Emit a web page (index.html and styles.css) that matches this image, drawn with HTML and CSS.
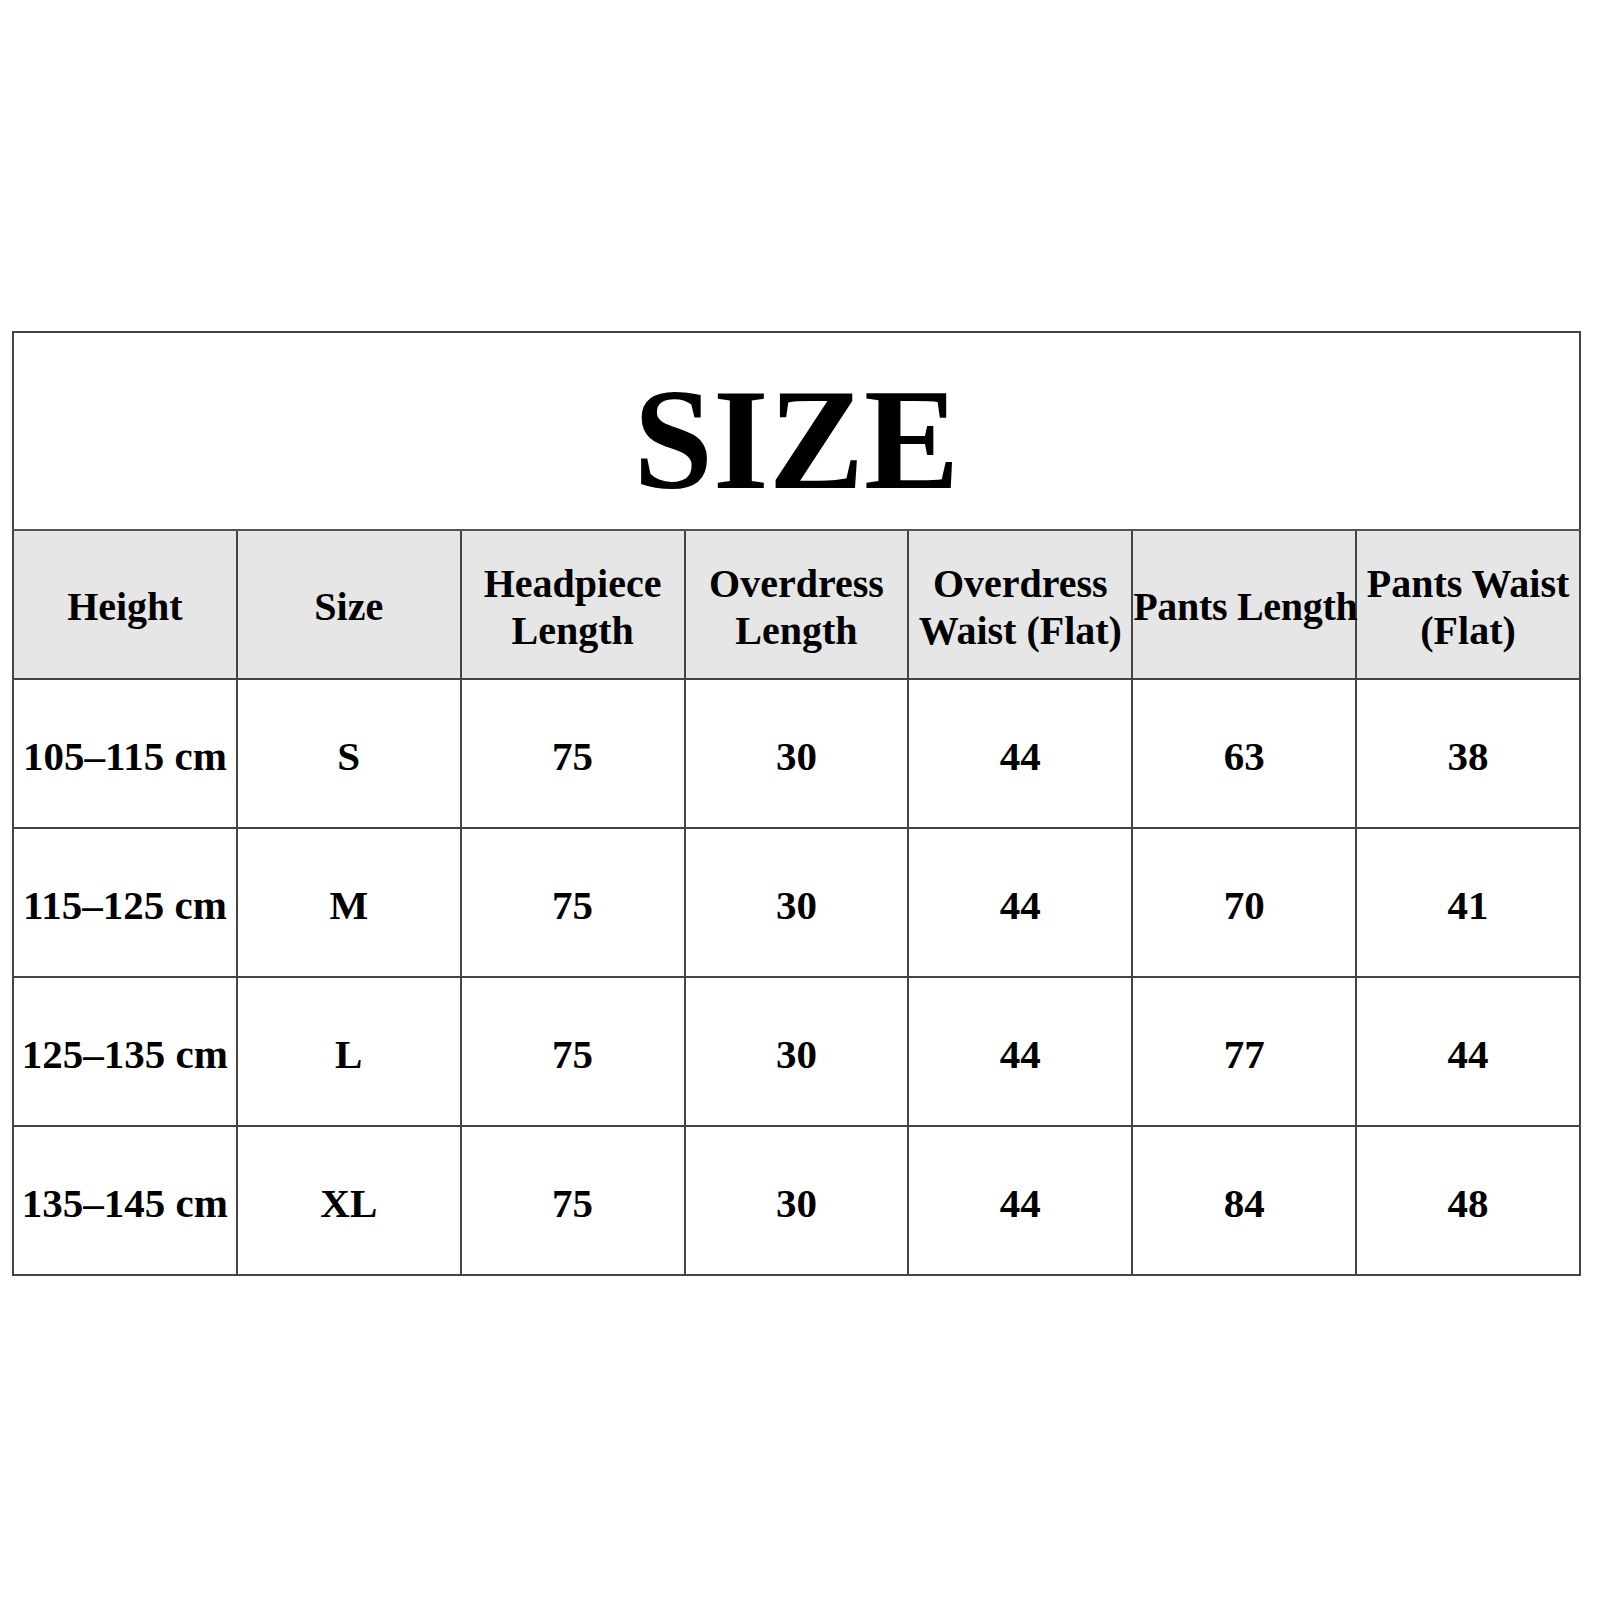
FILE: index.html
```html
<!DOCTYPE html>
<html>
<head>
<meta charset="utf-8">
<link rel="stylesheet" href="styles.css">
</head>
<body>
<div class="page">
<table class="chart">
<colgroup>
<col class="c"><col class="c"><col class="c"><col class="c"><col class="c"><col class="c"><col class="c">
</colgroup>
<tr class="title-row"><td colspan="7" class="title">SIZE</td></tr>
<tr class="head">
<th>Height</th><th>Size</th><th>Headpiece<br>Length</th><th>Overdress<br>Length</th><th>Overdress<br>Waist (Flat)</th><th class="tight">Pants Length</th><th>Pants Waist<br>(Flat)</th>
</tr>
<tr class="row"><td>105–115 cm</td><td>S</td><td>75</td><td>30</td><td>44</td><td>63</td><td>38</td></tr>
<tr class="row"><td>115–125 cm</td><td>M</td><td>75</td><td>30</td><td>44</td><td>70</td><td>41</td></tr>
<tr class="row"><td>125–135 cm</td><td>L</td><td>75</td><td>30</td><td>44</td><td>77</td><td>44</td></tr>
<tr class="row"><td>135–145 cm</td><td>XL</td><td>75</td><td>30</td><td>44</td><td>84</td><td>48</td></tr>
</table>
</div>
</body>
</html>
```
FILE: styles.css
```css
html, body {
  margin: 0;
  padding: 0;
  background: #fff;
}
.page {
  padding: 331px 0 0 12px;
}
.chart {
  width: 1569px;
  border-collapse: collapse;
  table-layout: fixed;
  font-family: "Liberation Serif", "Times New Roman", serif;
  font-weight: bold;
  color: #000;
  border: 2px solid #1a1a1a;
}
.c {
  width: 14.2857%;
}
.chart td, .chart th {
  border: 2px solid #444;
  text-align: center;
  vertical-align: middle;
  padding: 0;
  font-size: 40px;
  line-height: 47px;
  white-space: nowrap;
}
.title-row td.title {
  height: 178px;
  font-size: 143px;
  line-height: 1;
  padding-top: 18px;
  border-bottom: 2px solid #555;
}
.head th {
  height: 143px;
  background: #e6e6e6;
  font-weight: bold;
  padding-top: 4px;
  font-size: 40px;
}
.head th.tight {
  letter-spacing: -0.3px;
}
.row td {
  height: 142px;
  padding-top: 5px;
  font-size: 41px;
}
```
